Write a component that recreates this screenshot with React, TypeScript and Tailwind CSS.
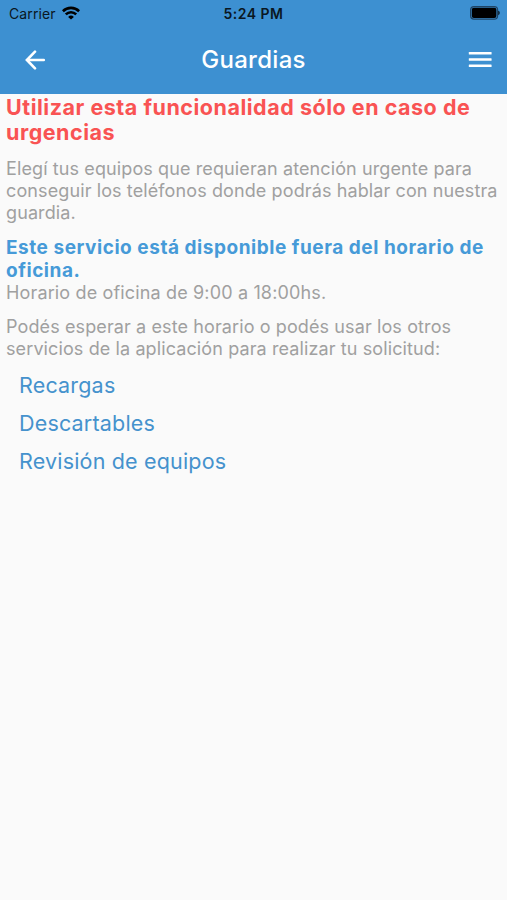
import React from 'react';

const LINKS = ['Recargas', 'Descartables', 'Revisión de equipos'];

const WifiIcon: React.FC = () => (
  <svg width="18" height="14" viewBox="0 0 18 14" fill="none" stroke="#000" strokeWidth="2.6">
    <path d="M0.9 5.2a11.6 11.6 0 0 1 16.2 0" />
    <path d="M3.8 8.4a7.4 7.4 0 0 1 10.4 0" />
    <path d="M9 13.6 6.1 10.9a4.1 4.1 0 0 1 5.8 0z" fill="#000" stroke="none" />
  </svg>
);

const BatteryIcon: React.FC = () => (
  <svg width="30" height="14" viewBox="0 0 30 14">
    <rect x="0.6" y="0.6" width="27" height="12.6" rx="3.4" fill="none" stroke="#1f4566" strokeWidth="1.2" />
    <rect x="1.8" y="1.8" width="24.6" height="10.2" rx="2" fill="#000" />
    <path d="M28.4 4.8c1.6.5 1.6 3.7 0 4.2z" fill="#000" />
  </svg>
);

const StatusBar: React.FC = () => (
  <div className="grid h-[26px] grid-cols-3 items-center px-[8px] text-[14px] leading-[26px] text-[#0a1722]">
    <div className="flex items-center gap-[6px] pl-px">
      <span className="pt-[2px] leading-[24px] tracking-[0.1px]">Carrier</span>
      <WifiIcon />
    </div>
    <span className="pt-[2px] text-center font-semibold leading-[24px] tracking-[0.5px]">5:24 PM</span>
    <div className="-mr-px flex justify-end">
      <BatteryIcon />
    </div>
  </div>
);

const NavBar: React.FC = () => (
  <div className="grid h-[67px] grid-cols-[1fr_auto_1fr] items-center px-[15px] text-white">
    <button type="button" aria-label="Volver" className="ml-[10px] w-fit">
      <svg
        width="21"
        height="20"
        viewBox="0 0 21 20"
        fill="none"
        stroke="currentColor"
        strokeWidth="2.6"
        strokeLinecap="round"
      >
        <path d="M18.8 10H2.2" />
        <path d="M10 1.7 1.9 10l8.1 8.3" />
      </svg>
    </button>
    <h1 className="text-[24px] font-medium leading-[30px] tracking-[0.3px]">Guardias</h1>
    <button type="button" aria-label="Menú" className="w-fit justify-self-end">
      <svg width="24" height="16" viewBox="0 0 24 16" fill="currentColor">
        <rect x="0.8" y="0" width="22.8" height="2.6" rx="0.6" />
        <rect x="0.8" y="6.2" width="22.8" height="2.6" rx="0.6" />
        <rect x="0.8" y="12.4" width="22.8" height="2.6" rx="0.6" />
      </svg>
    </button>
  </div>
);

const App: React.FC = () => {
  return (
    <div className="min-h-screen bg-[#fafafa] font-['Inter','Liberation_Sans',sans-serif]">
      <header className="h-[94px] bg-[#3d90d1]">
        <StatusBar />
        <NavBar />
      </header>

      <main className="px-[6px] pt-px text-[18px] leading-[22px] tracking-[0.11px] text-[#a0a0a0]">
        <h2 className="whitespace-nowrap text-[21.5px] font-bold leading-[25px] tracking-[0.52px] text-[#f95353]">
          Utilizar esta funcionalidad sólo en caso de
          <br />
          urgencias
        </h2>
        <p className="mt-[13px] whitespace-nowrap">
          Elegí tus equipos que requieran atención urgente para
          <br />
          conseguir los teléfonos donde podrás hablar con nuestra
          <br />
          guardia.
        </p>
        <p className="mt-[12px] whitespace-nowrap text-[19px] font-bold leading-[23px] tracking-[0.54px] text-[#469ad8]">
          Este servicio está disponible fuera del horario de
          <br />
          oficina.
        </p>
        <p className="tracking-[0.15px]">Horario de oficina de 9:00 a 18:00hs.</p>
        <p className="mt-[12px] whitespace-nowrap">
          Podés esperar a este horario o podés usar los otros
          <br />
          servicios de la aplicación para realizar tu solicitud:
        </p>
        <nav className="mt-[6px] flex flex-col pl-[13px]">
          {LINKS.map(link => (
            <a
              key={link}
              href="#"
              className="w-fit text-[21.5px] leading-[38px] tracking-[0.18px] text-[#4592cd]"
            >
              {link}
            </a>
          ))}
        </nav>
      </main>
    </div>
  );
};

export default App;
